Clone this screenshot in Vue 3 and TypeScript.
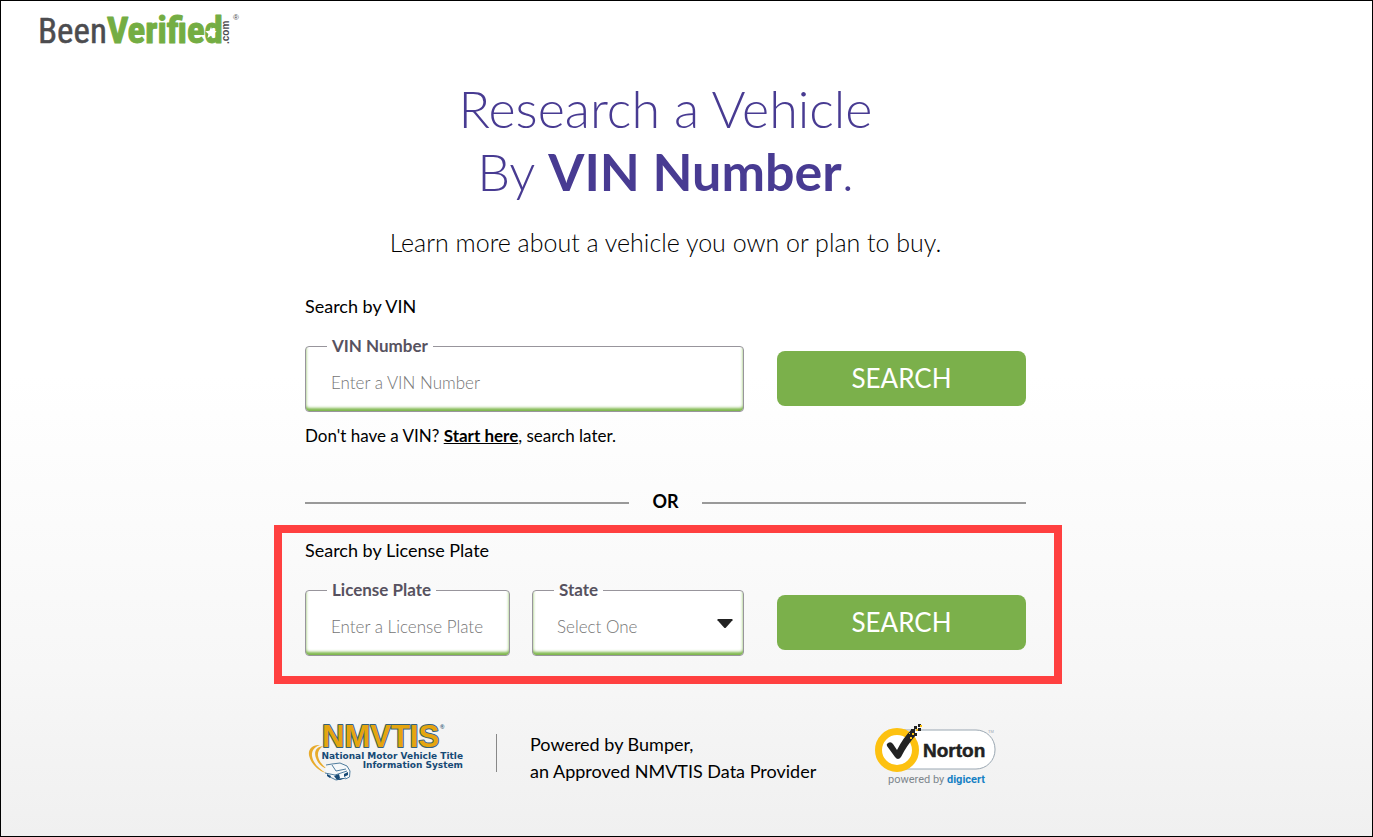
<script setup lang="ts">
import { ref } from 'vue'

const vin = ref('')
const plate = ref('')
const state = ref('')

const states: string[] = ['California', 'Florida', 'Illinois', 'New York', 'Texas', 'Washington']
</script>

<template>
  <div class="page">
    <header class="header">
      <a class="brand" href="#" aria-label="BeenVerified.com home">
        <svg width="204" height="40" viewBox="0 0 204 40">
          <text class="brand-name" x="0" y="32">Been<tspan class="brand-verified">Verified</tspan></text>
          <path class="brand-star" d="M173 16l1.600 3.800 4.100.4-3.100 2.700.9 4-3.500-2.100-3.500 2.100.9-4-3.100-2.700 4.100-.4z" />
          <text class="brand-com" transform="translate(191 33) rotate(-90)">.com</text>
          <text class="brand-mark" x="195" y="9">®</text>
        </svg>
      </a>
    </header>

    <main class="content">
      <h1 class="title">Research a Vehicle<br />By <strong>VIN Number</strong>.</h1>
      <p class="subtitle">Learn more about a vehicle you own or plan to buy.</p>

      <form class="search" @submit.prevent>
        <h2 class="search-heading">Search by VIN</h2>
        <div class="search-row">
          <fieldset class="field">
            <legend><label for="vin">VIN Number</label></legend>
            <input id="vin" v-model="vin" type="text" placeholder="Enter a VIN Number" />
          </fieldset>
          <button class="submit" type="submit">SEARCH</button>
        </div>
        <p class="hint">Don't have a VIN? <a href="#">Start here</a>, search later.</p>
      </form>

      <div class="divider">OR</div>

      <form class="search highlighted" @submit.prevent>
        <h2 class="search-heading">Search by License Plate</h2>
        <div class="search-row">
          <div class="plate-fields">
            <fieldset class="field">
              <legend><label for="plate">License Plate</label></legend>
              <input id="plate" v-model="plate" type="text" placeholder="Enter a License Plate" />
            </fieldset>
            <fieldset class="field">
              <legend><label for="state">State</label></legend>
              <select id="state" v-model="state">
                <option value="">Select One</option>
                <option v-for="s in states" :key="s" :value="s">{{ s }}</option>
              </select>
              <svg class="caret" width="16" height="10" viewBox="0 0 16 10" aria-hidden="true">
                <path d="M1 0h14q1 .4.500 1.200L9 8.500q-1 1-2 0L.5 1.200Q0 .4 1 0z" />
              </svg>
            </fieldset>
          </div>
          <button class="submit" type="submit">SEARCH</button>
        </div>
      </form>

      <footer class="partners">
        <svg class="nmvtis" width="160" height="62" viewBox="0 0 160 62" role="img" aria-label="NMVTIS">
          <path class="swoosh" d="M12 24C4 23-1 29 1.500 36 4 44 11 50 18 52 11 48 5 42 4 35c-.5-5 2-9 8-11z" />
          <path class="swoosh" d="M15 25c-8 1-9 7-7 12 2 6 6 9 11 11-5-4-8-8-9-13-.5-4 1-7 5-10z" />
          <text class="nmvtis-name" x="14" y="26">NMVTIS</text>
          <text class="nmvtis-mark" x="132" y="8">®</text>
          <text class="nmvtis-sub" x="155" y="38" text-anchor="end">National Motor Vehicle Title</text>
          <text class="nmvtis-sub" x="155" y="47" text-anchor="end">Information System</text>
          <path class="car-body" d="M17 47l6-3 8-1 7 2 4 5-1 6-3 2-9 1-3-3-6-2-2-3z" />
          <path class="car-line" d="M18 44l6-1 8-1 7 3 3 5-.5 6-4 2M17 52l10 2 12-4M24 44l4 6 10-2M20 55l8 4 10-2" />
          <path class="car-dark" d="M26 55l5-2 1 4-3 2zM19 53l4 2-1 2-3-2zM36 53l4-2v3l-4 2zM28 58l9-1-5 2z" />
        </svg>
        <p class="powered">Powered by Bumper,<br />an Approved NMVTIS Data Provider</p>
        <svg class="norton" width="124" height="68" viewBox="0 0 124 68" role="img" aria-label="Norton powered by DigiCert">
          <rect class="norton-pill" x="8" y="9" width="112" height="39" rx="19" />
          <circle class="norton-ring" cx="22" cy="29" r="18.500" />
          <path class="norton-check" d="M13 22q3-2 5 1l4 6Q28 17 36 9l5 5Q32 24 26 36q-3 4-6 0l-8-11q-1-2 1-3z" />
          <path class="norton-check" d="M36 8h4v4h-4zM39 5h3v3h-3zM43 7h3v3h-3zM43 3h3v3h-3zM39 12h3v3h-3z" />
          <path class="norton-spark" d="M37 12h2v2h-2zM41 8h2v2h-2zM45 4h2v2h-2zM35 16h2v2h-2zM34 12h1v1h-1z" />
          <text class="norton-name" x="48" y="36">Norton</text>
          <text class="norton-mark" x="113" y="12">TM</text>
          <text class="norton-by" x="13" y="62">powered by</text>
          <text class="norton-digi" x="72" y="62">digicert</text>
        </svg>
      </footer>
    </main>
  </div>
</template>

<style>
body {
  margin: 0;
}
</style>

<style scoped>
.page {
  box-sizing: border-box;
  min-height: 100vh;
  padding-right: 42px;
  border: 1px solid #000;
  background: linear-gradient(#fff 0%, #fff 45%, #f7f7f7 80%, #f0f0f0 100%);
  color: #000;
  font-family: Lato, "Liberation Sans", sans-serif;
  font-size: 18px;
  line-height: 24px;
}

.header {
  padding: 10px 37px 0;
}

.brand {
  display: block;
  width: 204px;
  height: 40px;
}

.brand svg {
  display: block;
  overflow: visible;
}

.brand-name {
  fill: #4c4c4f;
  stroke: #4c4c4f;
  stroke-width: 0.5px;
  stroke-linejoin: round;
  font-family: "Roboto Condensed", "Open Sans Condensed", Lato, sans-serif;
  font-size: 35px;
}

.brand-verified {
  fill: #74ad43;
  stroke: #74ad43;
  stroke-width: 1px;
  font-size: 37px;
  font-weight: 700;
}

.brand-star {
  fill: #fff;
}

.brand-com {
  fill: #4c4c4f;
  font-family: "Liberation Sans", sans-serif;
  font-size: 10px;
  font-weight: 700;
}

.brand-mark {
  fill: #4c4c4f;
  font-family: "Liberation Sans", sans-serif;
  font-size: 8px;
}

.content {
  box-sizing: border-box;
  width: 100%;
  max-width: 721px;
  margin: 0 auto;
  padding-top: 26px;
}

.title {
  margin: 0;
  color: #483b92;
  font-size: 52px;
  font-weight: 300;
  line-height: 63px;
  text-align: center;
}

.title strong {
  font-weight: 700;
}

.subtitle {
  margin: 23px 0 36px;
  font-size: 25px;
  font-weight: 300;
  line-height: 32px;
  text-align: center;
}

.search-heading {
  margin: 0;
  font-size: 18px;
  font-weight: 400;
  line-height: 24px;
}

.search-row {
  display: grid;
  grid-template-columns: 439fr 249fr;
  gap: 33px;
  margin-top: 18px;
}

.plate-fields {
  display: grid;
  grid-template-columns: 205fr 212fr;
  gap: 22px;
}

.field {
  position: relative;
  box-sizing: border-box;
  min-width: 0;
  height: 76px;
  margin: 0;
  padding: 0;
  border: 1px solid #98959c;
  border-radius: 4px;
  background: #fff;
  box-shadow: inset 0 -3px 3px #7db64b;
}

.field legend {
  margin-left: 21px;
  padding: 0 5px;
  color: #575260;
  font-size: 17px;
  font-weight: 700;
  line-height: 20px;
}

.field input,
.field select {
  box-sizing: border-box;
  display: block;
  width: 100%;
  height: 52px;
  margin: 0;
  padding: 0 24px;
  border: 0;
  outline: 0;
  appearance: none;
  background: transparent;
  color: #757575;
  font-family: inherit;
  font-size: 17px;
  font-weight: 300;
}

.field input {
  padding: 0 16px 0 25px;
}

.field input::placeholder {
  color: #757575;
  opacity: 1;
}

.caret {
  position: absolute;
  top: 19px;
  right: 10px;
  fill: #222;
  pointer-events: none;
}

.submit {
  height: 55px;
  margin-top: 15px;
  padding: 0 0 2px;
  border: 0;
  border-radius: 8px;
  background: #7bb04b;
  color: #fff;
  font-family: inherit;
  font-size: 26px;
  line-height: 32px;
  cursor: pointer;
}

.hint {
  margin: 12px 0 0;
  font-size: 17px;
}

.hint a {
  color: #000;
  font-weight: 700;
}

.divider {
  display: flex;
  align-items: center;
  gap: 23px;
  margin: 41px 0 12px;
  font-weight: 700;
}

.divider::before,
.divider::after {
  content: "";
  flex: 1;
  height: 2px;
  margin-top: 4px;
  background: #999;
}

.highlighted {
  margin: 0 -36px 0 -31px;
  padding: 5px 28px 20px 23px;
  border: 8px solid #ff4040;
}

.partners {
  display: flex;
  align-items: flex-start;
  padding: 37px 27px 20px 3px;
}

.partners svg {
  display: block;
  flex: none;
}

.powered {
  position: relative;
  margin: 10px auto 0 28px;
  padding-left: 34px;
  line-height: 27px;
}

.powered::before {
  content: "";
  position: absolute;
  top: 3px;
  left: 0;
  width: 1px;
  height: 38px;
  background: #888;
}

.nmvtis text {
  font-family: "Liberation Sans", sans-serif;
  font-weight: 700;
}

.swoosh {
  fill: #e8ab2c;
}

.nmvtis-name {
  fill: #e5a50f;
  stroke: #35627a;
  stroke-width: 2px;
  stroke-linejoin: round;
  paint-order: stroke;
  font-size: 31px;
}

.nmvtis-mark {
  fill: #35627a;
  font-size: 6px;
}

.nmvtis .nmvtis-sub {
  fill: #174a76;
  font-family: "DejaVu Sans", sans-serif;
  font-size: 9px;
}

.car-body {
  fill: #f5f8fa;
}

.car-line {
  fill: none;
  stroke: #4f7d9f;
}

.car-dark {
  fill: #174a76;
}

.norton text {
  font-family: "Liberation Sans", sans-serif;
}

.norton-pill {
  fill: #fff;
  stroke: #9aa7b2;
  stroke-width: 1px;
}

.norton-ring {
  fill: #fff;
  stroke: #fdc110;
  stroke-width: 7px;
}

.norton-check {
  fill: #222;
}

.norton-spark {
  fill: #fdc110;
}

.norton-name {
  fill: #222;
  stroke: #222;
  stroke-width: 0.5px;
  font-size: 19px;
  font-weight: 700;
}

.norton-mark {
  fill: #9aa7b2;
  font-size: 4px;
}

.norton .norton-by,
.norton .norton-digi {
  fill: #7d868c;
  font-family: Roboto, sans-serif;
  font-size: 11px;
}

.norton .norton-digi {
  fill: #1681c4;
  font-weight: 700;
}
</style>
